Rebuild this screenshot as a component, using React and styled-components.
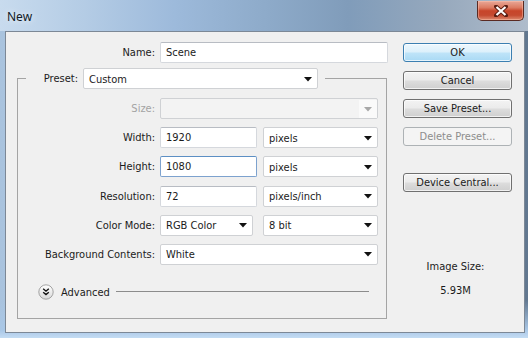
import React from "react";
import styled, { createGlobalStyle } from "styled-components";

const GlobalStyle = createGlobalStyle`
  html, body {
    margin: 0;
    padding: 0;
  }
  body {
    width: 528px;
    height: 338px;
    overflow: hidden;
    font-family: "DejaVu Sans Condensed", "DejaVu Sans", sans-serif;
    font-size: 11px;
    color: #1b1b1b;
  }
`;

const Window = styled.div`
  width: 528px;
  height: 338px;
  display: flex;
  flex-direction: column;
  overflow: hidden;
  background:
    linear-gradient(180deg, transparent 0, transparent 300px, #a9c7e6 330px, #c4dcf3 338px),
    linear-gradient(90deg, #a9c3de 0%, #b0c9e3 14%, #9bb8d9 32%, #8aa7c6 52%, #7f9bb9 66%, #8ea2b8 82%, #61778f 100%);
`;

const TitleBar = styled.div`
  height: 31px;
  flex: none;
  display: flex;
  justify-content: space-between;
  align-items: flex-start;
  padding-left: 7px;
  padding-right: 4px;
  box-sizing: border-box;
  background: linear-gradient(90deg, #c8dbee 0%, #b4cce5 16%, #9dbadb 33%, #8eabca 50%, #809cba 66%, #97a9bd 84%, #afbccb 100%);
`;

const Title = styled.span`
  font-family: "Noto Sans", "Open Sans", sans-serif;
  font-size: 12px;
  line-height: 14px;
  margin-top: 10px;
  color: #0f1a26;
  text-shadow: 0 0 6px rgba(255, 255, 255, 0.9);
`;

const CloseButton = styled.div`
  width: 47px;
  height: 20px;
  margin-top: 1px;
  box-sizing: border-box;
  border: 1px solid #5a2a22;
  border-top: none;
  border-radius: 0 0 5px 5px;
  background: linear-gradient(180deg, #e9a898 0%, #dc7b62 35%, #c7452a 52%, #c54a30 75%, #dd8a6f 100%);
  box-shadow: inset 0 0 0 1px rgba(255, 200, 180, 0.45);
  display: flex;
  align-items: center;
  justify-content: center;
`;

const Frame = styled.div`
  flex: 1;
  display: flex;
  padding: 0 3px 5px 5px;
  min-height: 0;
`;

const Client = styled.div`
  flex: 1;
  display: flex;
  background: #f0f0f0;
  border: 1px solid #7c8896;
`;

const LeftPane = styled.div`
  width: 371px;
  margin-left: 11px;
  padding-top: 10px;
  display: flex;
  flex-direction: column;
`;

const Row = styled.div`
  display: flex;
  align-items: center;
  height: 21px;
`;

const Label = styled.span`
  width: ${(p) => p.$w || 137}px;
  margin-right: 5px;
  text-align: right;
  white-space: nowrap;
  color: ${(p) => (p.$disabled ? "#a3a3a3" : "#1b1b1b")};
`;

const TextBox = styled.div`
  width: ${(p) => p.$w}px;
  height: 21px;
  box-sizing: border-box;
  background: #fff;
  border: 1px solid ${(p) => (p.$focus ? "#7da2ce" : "#d5d8dd")};
  border-top-color: ${(p) => (p.$focus ? "#5c8fc4" : "#b8bcc3")};
  border-radius: 2px;
  padding-left: 5px;
  display: flex;
  align-items: center;
`;

const Select = styled.div`
  width: ${(p) => p.$w}px;
  height: 21px;
  box-sizing: border-box;
  margin-left: ${(p) => p.$ml || 0}px;
  background: ${(p) => (p.$disabled ? "#f3f3f3" : "#fff")};
  border: 1px solid #cfd1d4;
  border-radius: 2px;
  display: flex;
  align-items: center;
  padding-left: 5px;
  padding-top: 1px;
`;

const SelectText = styled.span`
  flex: 1;
  white-space: nowrap;
`;

const ArrowCell = styled.span`
  width: 18px;
  align-self: stretch;
  display: flex;
  align-items: center;
  justify-content: center;
  background: ${(p) => (p.$disabled ? "#fafafa" : "transparent")};
`;

const Group = styled.fieldset`
  margin: 5px 0 0 0;
  padding: 9px 0 18px 0;
  width: 370px;
  box-sizing: border-box;
  border: 1px solid #a4a4a4;
  border-radius: 0;
  display: flex;
  flex-direction: column;
  gap: 8.2px;
`;

const Legend = styled.legend`
  margin-left: 8px;
  padding: 0 7px 0 14px;
  display: flex;
  align-items: center;
  height: 21px;
`;

const Advanced = styled.div`
  display: flex;
  align-items: center;
  margin: 11px 17px 0 20px;
  height: 16px;
`;

const AdvancedText = styled.span`
  margin-left: 7px;
  margin-right: 6px;
`;

const Rule = styled.div`
  flex: 1;
  height: 1px;
  background: #8c8c8c;
  margin-top: -1px;
`;

const RightPane = styled.div`
  width: 109px;
  margin-left: 15px;
  padding-top: 11px;
  display: flex;
  flex-direction: column;
`;

const Button = styled.div`
  height: 19px;
  box-sizing: border-box;
  margin-bottom: ${(p) => p.$mb ?? 9}px;
  border: 1px solid ${(p) => (p.$default ? "#3c7fb1" : p.$disabled ? "#adb2b5" : "#707070")};
  border-radius: 3px;
  display: flex;
  align-items: center;
  justify-content: center;
  color: ${(p) => (p.$disabled ? "#8d8d8d" : "#1b1b1b")};
  background: ${(p) =>
    p.$default
      ? "linear-gradient(180deg, #edf7fd 0%, #dcf0fb 48%, #bfe4f8 52%, #a9d9f4 100%)"
      : p.$disabled
      ? "#f4f4f4"
      : "linear-gradient(180deg, #f3f3f3 0%, #ebebeb 48%, #dddddd 52%, #cfcfcf 100%)"};
  box-shadow: inset 0 0 0 1px ${(p) => (p.$disabled ? "transparent" : "rgba(255,255,255,0.7)")};
`;

const SizeInfo = styled.div`
  margin-top: 68px;
  padding-right: 4px;
  text-align: center;
  line-height: 14px;
  display: flex;
  flex-direction: column;
  gap: 10px;
`;

function Arrow({ disabled }) {
  return (
    <ArrowCell $disabled={disabled}>
      <svg width="8" height="5" viewBox="0 0 8 5">
        <path d="M0 0H8L4 4.5Z" fill={disabled ? "#a8a8a8" : "#111"} />
      </svg>
    </ArrowCell>
  );
}

function Dropdown({ w, ml, value, disabled }) {
  return (
    <Select $w={w} $ml={ml} $disabled={disabled}>
      <SelectText>{value}</SelectText>
      <Arrow disabled={disabled} />
    </Select>
  );
}

function AdvancedIcon() {
  return (
    <svg width="16" height="16" viewBox="0 0 16 16">
      <defs>
        <linearGradient id="adv" x1="0" y1="0" x2="0" y2="1">
          <stop offset="0" stopColor="#ffffff" />
          <stop offset="1" stopColor="#d9d9d9" />
        </linearGradient>
      </defs>
      <circle cx="8" cy="8" r="7.2" fill="url(#adv)" stroke="#9a9a9a" strokeWidth="0.9" />
      <path d="M5.2 4.8L8 7.2L10.8 4.8M5.2 8.2L8 10.6L10.8 8.2" fill="none" stroke="#111" strokeWidth="1.4" />
    </svg>
  );
}

export default function App() {
  return (
    <>
      <GlobalStyle />
      <Window>
        <TitleBar>
          <Title>New</Title>
          <CloseButton>
            <svg width="14" height="12" viewBox="0 0 14 12">
              <path d="M2 1.5L12 10.5M12 1.5L2 10.5" stroke="#5a1d12" strokeWidth="4" strokeLinecap="round" />
              <path d="M2.5 2L11.5 10M11.5 2L2.5 10" stroke="#fff" strokeWidth="2.2" />
            </svg>
          </CloseButton>
        </TitleBar>
        <Frame>
          <Client>
            <LeftPane>
              <Row>
                <Label $w={138}>Name:</Label>
                <TextBox $w={228}>Scene</TextBox>
              </Row>
              <Group>
                <Legend>
                  <Label $w={38}>Preset:</Label>
                  <Dropdown w={235} value="Custom" />
                </Legend>
                <Row>
                  <Label $disabled>Size:</Label>
                  <Dropdown w={218} value="" disabled />
                </Row>
                <Row>
                  <Label>Width:</Label>
                  <TextBox $w={97}>1920</TextBox>
                  <Dropdown w={115} ml={6} value="pixels" />
                </Row>
                <Row>
                  <Label>Height:</Label>
                  <TextBox $w={97} $focus>1080</TextBox>
                  <Dropdown w={115} ml={6} value="pixels" />
                </Row>
                <Row>
                  <Label>Resolution:</Label>
                  <TextBox $w={97}>72</TextBox>
                  <Dropdown w={115} ml={6} value="pixels/inch" />
                </Row>
                <Row>
                  <Label>Color Mode:</Label>
                  <Dropdown w={93} value="RGB Color" />
                  <Dropdown w={115} ml={10} value="8 bit" />
                </Row>
                <Row>
                  <Label>Background Contents:</Label>
                  <Dropdown w={218} value="White" />
                </Row>
                <Advanced>
                  <AdvancedIcon />
                  <AdvancedText>Advanced</AdvancedText>
                  <Rule />
                </Advanced>
              </Group>
            </LeftPane>
            <RightPane>
              <Button $default>OK</Button>
              <Button>Cancel</Button>
              <Button>Save Preset...</Button>
              <Button $disabled $mb={27}>Delete Preset...</Button>
              <Button $mb={0}>Device Central...</Button>
              <SizeInfo>
                <span>Image Size:</span>
                <span>5.93M</span>
              </SizeInfo>
            </RightPane>
          </Client>
        </Frame>
      </Window>
    </>
  );
}
